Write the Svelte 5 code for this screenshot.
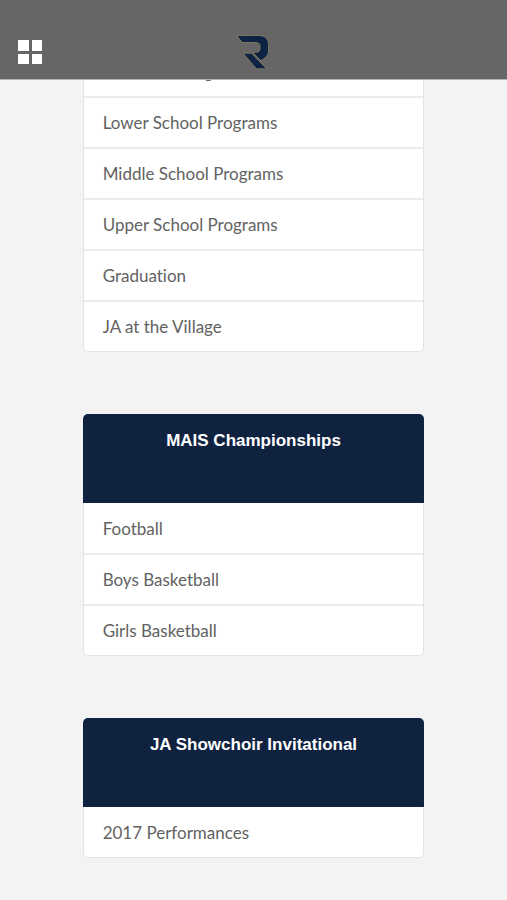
<script lang="ts">
  type Section = { title?: string; items: string[] };

  const sections: Section[] = [
    {
      items: [
        'Christmas Sing',
        'Lower School Programs',
        'Middle School Programs',
        'Upper School Programs',
        'Graduation',
        'JA at the Village',
      ],
    },
    {
      title: 'MAIS Championships',
      items: ['Football', 'Boys Basketball', 'Girls Basketball'],
    },
    {
      title: 'JA Showchoir Invitational',
      items: ['2017 Performances'],
    },
  ];
</script>

<header class="topbar">
  <button type="button" class="menu" aria-label="Menu">
    <svg width="24" height="24" viewBox="0 0 24 24" fill="#fff">
      <path d="M0 0h11v11H0zM14 0h10v11H14zM0 14h11v10H0zM14 14h10v10H14z" />
    </svg>
  </button>
  <a href="/" class="logo" aria-label="Home">
    <svg width="36" height="36" viewBox="0 0 36 36">
      <g fill="#0e2344" stroke="#8b8062" stroke-width="0.8" stroke-linejoin="round">
        <path d="M0.8 1.5H23C29 1.5 32.5 5 32.5 10.5V17C32.5 21 29.5 24.5 24.5 26.5L16.5 18.3H20C23 18.3 24 17 24 14.5V12C24 9.5 22.5 8.5 19.5 8.5H6Z" />
        <path d="M7 19.2H15.5L30.5 34.8H20.5Z" />
      </g>
    </svg>
  </a>
</header>

<main>
  {#each sections as section}
    <section class="card">
      {#if section.title}
        <h2>{section.title}</h2>
      {/if}
      <ul>
        {#each section.items as item}
          <li><a href="/">{item}</a></li>
        {/each}
      </ul>
    </section>
  {/each}
</main>

<style>
  :global(body) {
    background: #f3f3f3;
  }

  .topbar {
    position: sticky;
    top: 0;
    z-index: 1;
    display: grid;
    grid-template-columns: 1fr auto 1fr;
    align-items: end;
    box-sizing: border-box;
    height: 80px;
    padding: 0 18px 9px;
    background: #666;
    border-bottom: 1px solid #b5b5b5;
  }

  .topbar svg {
    display: block;
  }

  .menu {
    justify-self: start;
    margin-bottom: 6px;
    padding: 0;
    border: none;
    background: none;
    cursor: pointer;
  }

  /* the list scrolls under the bar */
  main {
    display: flex;
    flex-direction: column;
    align-items: center;
    gap: 62px;
    margin-top: -34px;
    padding-bottom: 40px;
  }

  .card {
    width: 67.4%;
    font-size: 17px;
  }

  h2 {
    box-sizing: border-box;
    height: 89px;
    margin: 0;
    padding: 17px 18px;
    border-radius: 5px 5px 0 0;
    background: #0f2341;
    color: #fff;
    font-family: "Liberation Sans", Arial, sans-serif;
    font-size: 17px;
    line-height: 20px;
    text-align: center;
  }

  ul {
    margin: 0;
    padding: 0;
    list-style: none;
    background: #fff;
    border: 1px solid #e4e4e4;
    border-top: none;
    border-radius: 0 0 5px 5px;
  }

  li + li {
    border-top: 2px solid #ebebeb;
  }

  li a {
    display: block;
    padding: 12px 19px;
    color: #626262;
    font-family: Lato, sans-serif;
    font-variant-ligatures: none;
    line-height: 25px;
    text-decoration: none;
  }

  li:first-child a {
    padding-top: 13px;
  }
</style>
